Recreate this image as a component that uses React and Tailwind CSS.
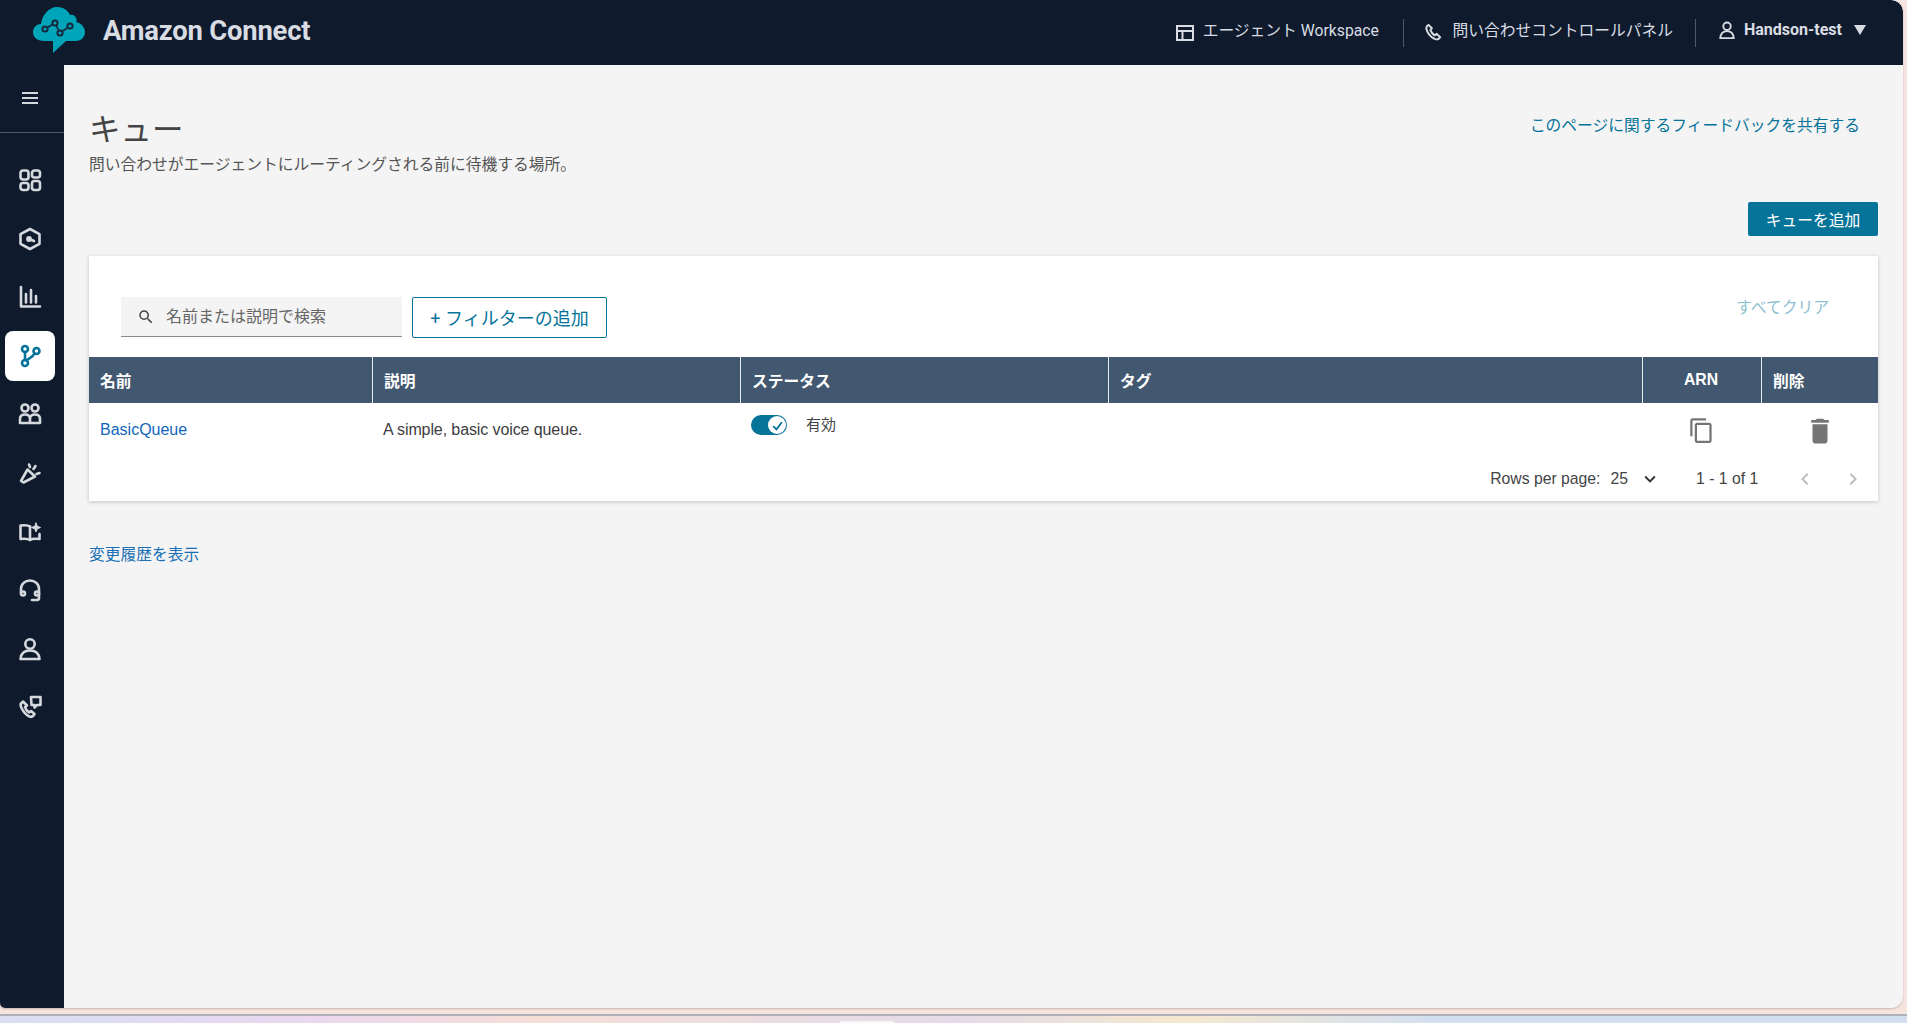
import { MdOutlineContentCopy, MdDelete, MdSearch, MdExpandMore, MdChevronLeft, MdChevronRight } from 'react-icons/md';

const jp = 'font-["Roboto","Noto_Sans_CJK_JP",sans-serif]';
const arial = 'font-["Liberation_Sans","Noto_Sans_CJK_JP",sans-serif]';

function Logo() {
  return (
    <svg viewBox="33 7 52 46" className="w-[52px] h-[46px]">
      <path
        fill="#00a5b9"
        d="M44 41C37 41 33 37 33 32C33 27 37 24 41 24C42 15 49 7 57 7C63 7 68 10 70 15C72 14 75 15 76 18C77 20 77 21 76 22C81 23 85 27 85 32C85 37 81 41 76 41L66 41L53 53L53 41Z"
      />
      <path fill="none" stroke="#16283c" strokeWidth="1.6" d="M45 29L55 23L60 33L70 26" />
      {[[45, 29], [55, 23], [60, 33], [70, 26]].map(([cx, cy]) => (
        <circle key={cx} cx={cx} cy={cy} r="2.6" fill="#00a5b9" stroke="#16283c" strokeWidth="2" />
      ))}
    </svg>
  );
}

function NavSvg({ children, color = '#d5d9de' }) {
  return (
    <svg viewBox="0 0 24 24" fill="none" stroke={color} strokeWidth="2.6" strokeLinecap="round" strokeLinejoin="round" className="w-[24px] h-[24px]">
      {children}
    </svg>
  );
}

// side navigation, top to bottom
const navIcons = [
  <>
    <rect x="2.5" y="2.5" width="8" height="9" rx="2.5" />
    <rect x="14" y="2.5" width="8" height="7" rx="2.5" />
    <rect x="2.5" y="15" width="8" height="7" rx="2.5" />
    <rect x="14" y="13" width="8" height="9" rx="2.5" />
  </>,
  <>
    <path d="M12 2L21.5 7.2V16.8L12 22L2.5 16.8V7.2Z" />
    <circle cx="11" cy="12" r="1.6" fill="#d5d9de" />
    <path d="M11 12L16 14" />
  </>,
  <>
    <path d="M3 2V21.5H22" />
    <path d="M8 9V17.5M13 5V17.5M18 11V17.5" />
  </>,
  <>
    <circle cx="7" cy="5" r="3" />
    <circle cx="7" cy="19" r="3" />
    <circle cx="18.5" cy="7" r="3" />
    <path d="M7 8V16M16.5 9.5C15 13 11 14 8.5 16.5" />
  </>,
  <>
    <circle cx="7" cy="6" r="3.5" />
    <circle cx="17" cy="6" r="3.5" />
    <path d="M2 21V17C2 14 4 12.5 7 12.5C10 12.5 12 14 12 17V21ZM12 21V17C12 14 14 12.5 17 12.5C20 12.5 22 14 22 17V21Z" />
  </>,
  <>
    <path d="M3 20L9.5 8.5L17 15.5L5.5 21.5Z" />
    <path d="M11 3.5L12 6M21.5 12L18.5 13M17.5 5L15.5 8" />
  </>,
  <>
    <path d="M12 6.5C10 5 6 5 2.5 5.5V19C6 18.5 10 18.5 12 20C14 18.5 17 18.5 21.5 19V14" />
    <path d="M12 6.5V20" />
    <path d="M18 3L19.3 6.2L22.5 7.5L19.3 8.8L18 12L16.7 8.8L13.5 7.5L16.7 6.2Z" fill="#d5d9de" strokeWidth="1" />
  </>,
  <>
    <path d="M3 15V11C3 6 7 2.5 12 2.5C17 2.5 21 6 21 11V20C21 21.5 20 22 19 22H14" />
    <circle cx="5" cy="15.5" r="2" />
    <circle cx="19" cy="15.5" r="2" />
  </>,
  <>
    <circle cx="12" cy="7" r="4.7" />
    <path d="M2.5 22C3 16 7 13.5 12 13.5C17 13.5 21 16 21.5 22Z" />
  </>,
  <>
    <path d="M5 6.5C2.5 8 2 10 3.5 13C5.5 17 8 20 11.5 21.5C14 22.5 15.5 21 16.5 19L13 16L11 17.5C9 16 7.5 14 7 12L9 10.5Z" />
    <path d="M13 2H22.5V10H19L16.5 12.5V10H13.5Z" />
  </>,
];

function HeaderBar() {
  return (
    <header className="h-[65px] bg-[#0f1b2d] flex items-center rounded-tr-[12px] shrink-0">
      <div className="ml-[33px] mt-[-5px] flex items-center"><Logo /></div>
      <span className={`ml-[18px] mt-[-2px] text-[27.4px] font-bold text-[#d9dde3] tracking-[-0.2px] ${jp}`}>Amazon Connect</span>
      <div className={`ml-auto flex items-center text-[15.75px] text-[#d9dde3] pr-[37px] ${jp}`}>
        <svg viewBox="0 0 18 18" fill="none" stroke="#d9dde3" strokeWidth="2" className="w-[18px] h-[18px] ml-[1px]">
          <rect x="1" y="2" width="16" height="14" />
          <path d="M1 7H17M6.5 7V16" />
        </svg>
        <span className="ml-[9px] mt-[-3px]">エージェント Workspace</span>
        <div className="w-px h-[28px] bg-[#4d5a6b] ml-[24px]" />
        <svg viewBox="0 0 24 24" fill="none" stroke="#d9dde3" strokeWidth="2.6" strokeLinejoin="round" className="w-[18px] h-[18px] ml-[20.5px] mt-[-2px]">
          <path d="M6 2.5C3 4 2.5 7 4 10.5C6 15 9.5 19 14 21C17 22.5 20 21.5 21.5 19L17 14.5L14 16.5C12 15 9.5 12 8.5 9.5L10.5 7Z" />
        </svg>
        <span className="ml-[10px] mt-[-3px]">問い合わせコントロールパネル</span>
        <div className="w-px h-[28px] bg-[#4d5a6b] ml-[22px]" />
        <div className="flex items-center mt-[-6px] ml-[22px]">
          <svg viewBox="0 0 24 24" fill="none" stroke="#d9dde3" strokeWidth="2.5" className="w-[18px] h-[18px]">
            <circle cx="12" cy="7" r="5" />
            <path d="M3 23C3.5 16.5 7 13.5 12 13.5C17 13.5 20.5 16.5 21 23Z" />
          </svg>
          <span className="ml-[8px] font-bold text-[#d9dde3] text-[16px]">Handson-test</span>
          <span className="ml-[12px] w-0 h-0 border-l-[6.5px] border-r-[6.5px] border-t-[10px] border-l-transparent border-r-transparent border-t-[#d9dde3]" />
        </div>
      </div>
    </header>
  );
}

function SideNav() {
  return (
    <aside className="w-[64px] bg-[#0f1b2d] shrink-0">
      <div className="h-[68px] w-full border-b border-[#4d5a6b] flex items-center justify-center pr-[4px] pb-[2px]">
        <svg viewBox="0 0 16 14" fill="none" stroke="#d5d9de" strokeWidth="2" className="w-[16px] h-[14px]">
          <path d="M0 2H16M0 7H16M0 12H16" />
        </svg>
      </div>
      <nav className="pt-[22px] pl-[5px] flex flex-col gap-[8.6px]">
        {navIcons.map((icon, i) => (
          <div key={i} className={`w-[50px] h-[50px] rounded-[8px] flex items-center justify-center ${i === 3 ? 'bg-white' : ''}`}>
            {i === 3 ? <NavSvg color="#067399">{icon}</NavSvg> : <NavSvg>{icon}</NavSvg>}
          </div>
        ))}
      </nav>
    </aside>
  );
}

const columns = ['名前', '説明', 'ステータス', 'タグ', 'ARN', '削除'];

function QueueTable() {
  return (
    <section className="bg-white shadow-[0_1px_4px_rgba(0,0,0,0.2)] mt-[20px]">
      <div className={`h-[101px] pt-[41px] pl-[32px] pr-[49px] flex items-start ${jp}`}>
        <div className="w-[281px] h-[40px] bg-[#f4f4f4] border-b border-[#8a8a8a] flex items-center pl-[16px] text-[16px] text-[#666]">
          <MdSearch className="text-[18px] text-[#444] mr-[11px]" />
          名前または説明で検索
        </div>
        <button className="ml-[10px] w-[195px] h-[41px] border border-[#067399] rounded-[2px] text-[#067399] text-[18px] pt-[2px]">+ フィルターの追加</button>
        <span className="ml-auto mt-[-1px] text-[15.75px] text-[#8cc0d2]">すべてクリア</span>
      </div>
      <div className={`grid grid-cols-[283px_368px_368px_534px_119px_117px] h-[46px] bg-[#425871] text-white text-[15.75px] font-bold ${arial}`}>
        {columns.map((c, i) => (
          <div
            key={c}
            className={`flex items-center ${i > 0 ? 'border-l border-[#e8ebee]' : ''} ${c === 'ARN' ? 'justify-center pr-[2px] pb-[1px]' : 'pl-[11px] pt-[3px]'}`}
          >
            {c}
          </div>
        ))}
      </div>
      <div className={`grid grid-cols-[283px_368px_368px_534px_119px_117px] h-[50px] text-[16px] ${arial}`}>
        <div className="pl-[11px] pt-[15px] text-[#1266bd]">BasicQueue</div>
        <div className="pl-[11px] pt-[15px] text-[#3d3d3d] tracking-[-0.1px]">A simple, basic voice queue.</div>
        <div className="pl-[11px] pt-[12px] flex items-start">
          <span className="w-[36px] h-[20px] rounded-full bg-[#067399] flex items-center justify-end pr-[1px]">
            <span className="w-[18px] h-[18px] rounded-full bg-white flex items-center justify-center">
              <svg viewBox="0 0 12 12" fill="none" stroke="#067399" strokeWidth="1.7" className="w-[13px] h-[13px]">
                <path d="M2 6.5L5 9.5L10 3" />
              </svg>
            </span>
          </span>
          <span className="ml-[19px] mt-[-1px] text-[15px] text-[#444]">有効</span>
        </div>
        <div />
        <div className="flex justify-center pt-[14px]">
          <MdOutlineContentCopy className="text-[27px] text-[#757575]" />
        </div>
        <div className="flex justify-center pt-[13px]">
          <MdDelete className="text-[30px] text-[#757575] scale-y-[1.1]" />
        </div>
      </div>
      <div className={`h-[48px] flex items-center justify-end text-[15.75px] text-[#444] pr-[13px] pt-[3px] ${arial}`}>
        <span>Rows per page:</span>
        <span className="ml-[10px]">25</span>
        <MdExpandMore className="ml-[11px] text-[22px] text-[#333]" />
        <span className="ml-[35px] w-[64px] whitespace-nowrap">1 - 1 of 1</span>
        <MdChevronLeft className="ml-[33px] text-[24px] text-[#bdbdbd]" />
        <MdChevronRight className="ml-[24px] text-[24px] text-[#bdbdbd]" />
      </div>
    </section>
  );
}

export default function App() {
  return (
    <div className="relative w-full h-[1023px] bg-[#f6e4df] flex flex-col overflow-hidden">
      <div className="h-[1008px] mr-[4px] flex flex-col rounded-br-[12px] rounded-bl-[5px] rounded-tr-[12px] bg-[#f4f4f4] shadow-[0_1px_2px_rgba(0,0,0,0.2)] overflow-hidden shrink-0">
        <HeaderBar />
        <div className="flex flex-1 min-h-0">
          <SideNav />
          <main className={`flex-1 px-[25px] ${jp}`}>
            <div className="flex justify-between items-start pt-[47px]">
              <div>
                <h1 className="text-[31.5px] leading-[38px] text-[#444] font-normal">キュー</h1>
                <p className="mt-[4px] text-[15.75px] leading-[22px] text-[#555]">問い合わせがエージェントにルーティングされる前に待機する場所。</p>
              </div>
              <a className="mr-[18px] mt-[2px] text-[15.75px] text-[#067399]">このページに関するフィードバックを共有する</a>
            </div>
            <div className="flex justify-end mt-[26px]">
              <button className="w-[130px] h-[34px] bg-[#067399] rounded-[2px] text-white text-[15.75px] pt-[3px]">キューを追加</button>
            </div>
            <QueueTable />
            <a className={`block mt-[42px] text-[15.75px] text-[#1a6fb5] ${jp}`}>変更履歴を表示</a>
          </main>
        </div>
      </div>
      <div className="h-[6px] shrink-0" />
      <div className="h-[2px] bg-[#adb0ba] shrink-0" />
      <div className="flex-1 bg-[linear-gradient(90deg,#d8dff0_0%,#e9d8ef_16%,#f5dfd8_28%,#e3dbe8_50%,#f5e8cf_62%,#d4e0f0_75%,#d4e0f0_100%)] flex justify-start">
        <div className="ml-[840px] mt-[5px] w-[54px] h-[3px] bg-[#f5f5f5]" />
      </div>
    </div>
  );
}
